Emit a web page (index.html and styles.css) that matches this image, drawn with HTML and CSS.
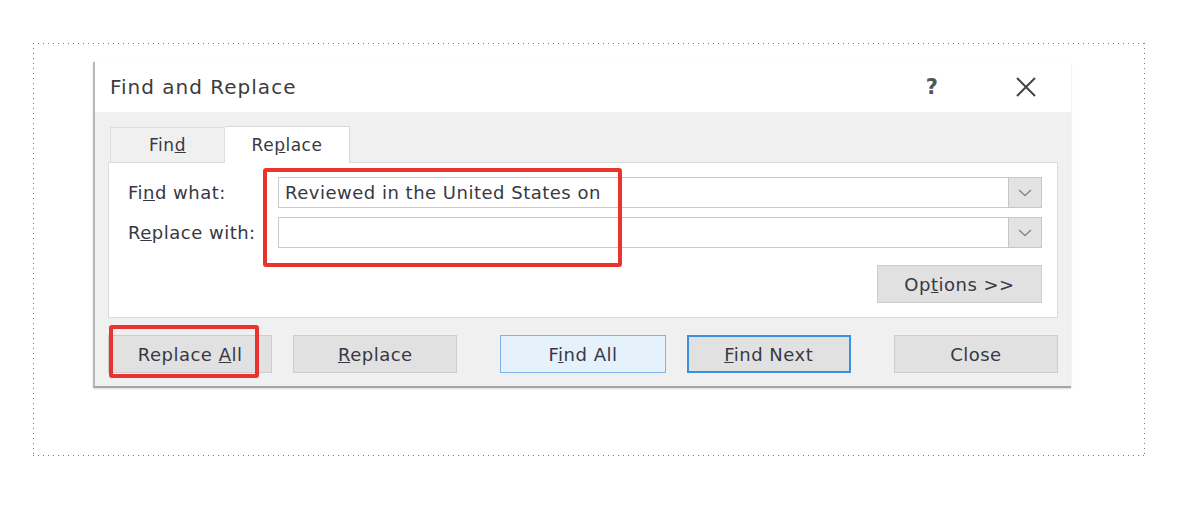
FILE: index.html
```html
<!DOCTYPE html>
<html lang="en">
<head>
    <meta charset="UTF-8">
    <meta name="viewport" content="width=device-width, initial-scale=1.0">
    <title>Find and Replace</title>
    <link rel="stylesheet" href="styles.css">
</head>
<body>
    <div class="frame">
        <div class="dialog">
            <div class="dialog-titlebar">
                <span class="dialog-title">Find and Replace</span>
                <span class="help-btn">?</span>
                <span class="close-btn">
                    <svg width="22" height="20" viewBox="0 0 22 20">
                        <path d="M2 1 L20 19 M20 1 L2 19" stroke="#444" stroke-width="2" fill="none"/>
                    </svg>
                </span>
            </div>

            <div class="dialog-body">
                <div class="tabs">
                    <div class="tab">Fin<u>d</u></div>
                    <div class="tab tab-active">Re<u>p</u>lace</div>
                </div>

                <div class="panel">
                    <div class="field-row">
                        <label class="field-label">Fi<u>n</u>d what:</label>
                        <div class="combo">
                            <div class="combo-input">Reviewed in the United States on</div>
                            <div class="combo-arrow">
                                <svg width="14" height="8" viewBox="0 0 14 8">
                                    <path d="M1 1 L7 6.5 L13 1" stroke="#8a8a8a" stroke-width="1.5" fill="none"/>
                                </svg>
                            </div>
                        </div>
                    </div>
                    <div class="field-row">
                        <label class="field-label">R<u>e</u>place with:</label>
                        <div class="combo">
                            <div class="combo-input"></div>
                            <div class="combo-arrow">
                                <svg width="14" height="8" viewBox="0 0 14 8">
                                    <path d="M1 1 L7 6.5 L13 1" stroke="#8a8a8a" stroke-width="1.5" fill="none"/>
                                </svg>
                            </div>
                        </div>
                    </div>
                    <div class="options-row">
                        <button class="btn">Op<u>t</u>ions &gt;&gt;</button>
                    </div>
                </div>

                <div class="button-row">
                    <button class="btn">Replace <u>A</u>ll</button>
                    <button class="btn"><u>R</u>eplace</button>
                    <button class="btn btn-hover spaced">F<u>i</u>nd All</button>
                    <button class="btn btn-default"><u>F</u>ind Next</button>
                    <button class="btn spaced">Close</button>
                </div>
            </div>

            <!-- highlight boxes -->
            <div class="mark mark-fields"></div>
            <div class="mark mark-replace-all"></div>
        </div>
    </div>
</body>
</html>
```

FILE: styles.css
```css
body {
    margin: 0;
    padding: 0;
    background: #fff;
    font-family: "DejaVu Sans", Verdana, sans-serif;
    color: #383844;
    letter-spacing: 0.5px;
}
.frame {
    margin: 43px 0 0 33px;
    width: 1112px;
    height: 413px;
    box-sizing: border-box;
    padding: 19px 0 0 60px;
    background:
        repeating-linear-gradient(to right, #777 0 1px, transparent 1px 5px) top left / 100% 1px no-repeat,
        repeating-linear-gradient(to right, #777 0 1px, transparent 1px 5px) bottom left / 100% 1px no-repeat,
        repeating-linear-gradient(to bottom, #777 0 1px, transparent 1px 5px) top left / 1px 100% no-repeat,
        repeating-linear-gradient(to bottom, #777 0 1px, transparent 1px 5px) top right / 1px 100% no-repeat;
}
.dialog {
    position: relative;
    width: 978px;
    box-sizing: border-box;
    border-left: 2px solid #b8b8b8;
    border-bottom: 2px solid #a4a4a4;
    box-shadow: 0 1px 2px rgba(0, 0, 0, 0.15);
}
.dialog-titlebar {
    height: 50px;
    display: flex;
    align-items: center;
    padding-left: 15px;
    background: #fff;
}
.dialog-title {
    font-size: 20px;
    letter-spacing: 1px;
    color: #3c3c3c;
    flex: 1;
}
.help-btn {
    width: 20px;
    margin-right: 73px;
    font-size: 21px;
    font-weight: bold;
    color: #555;
    text-align: center;
}
.close-btn {
    width: 22px;
    height: 20px;
    margin-right: 34px;
}
.dialog-body {
    background: #f0f0f0;
    padding: 13px 13px 13px 13px;
}
.tabs {
    display: flex;
    align-items: flex-end;
    padding-left: 2px;
    height: 37px;
}
.tab {
    width: 115px;
    height: 35px;
    box-sizing: border-box;
    border: 1px solid #dedede;
    border-bottom: none;
    display: flex;
    align-items: center;
    justify-content: center;
    font-size: 17px;
}
.tab-active {
    width: 125px;
    height: 37px;
    background: #fff;
    border-left: none;
    border-color: #d9d9d9;
    margin-bottom: -1px;
    position: relative;
}
.panel {
    height: 156px;
    box-sizing: border-box;
    background: #fff;
    border: 1px solid #dcdcdc;
    padding: 14px 15px 0 19px;
}
.field-row {
    display: flex;
    align-items: center;
    height: 31px;
    margin-bottom: 9px;
}
.field-label {
    width: 150px;
    font-size: 18px;
}
.combo {
    flex: 1;
    display: flex;
    height: 31px;
}
.combo-input {
    flex: 1;
    border: 1px solid #c9c9c9;
    border-right: none;
    padding-left: 6px;
    font-size: 18px;
    line-height: 29px;
}
.combo-arrow {
    width: 34px;
    box-sizing: border-box;
    background: #e3e3e3;
    border: 1px solid #c6c6c6;
    display: flex;
    align-items: center;
    justify-content: center;
}
.options-row {
    display: flex;
    justify-content: flex-end;
    margin-top: 17px;
}
.btn {
    width: 165px;
    height: 38px;
    box-sizing: border-box;
    background: #e1e1e1;
    border: 1px solid #cdcdcd;
    font-family: inherit;
    font-size: 18px;
    letter-spacing: inherit;
    color: #383844;
    padding: 0;
}
.btn-hover {
    width: 166px;
    background: #e5f1fb;
    border-color: #7ab4ea;
}
.btn-default {
    border: 2px solid #3c8fdc;
}
.button-row {
    display: flex;
    gap: 21px;
    margin-top: 17px;
}
.spaced {
    margin-left: 22px;
}
.mark {
    position: absolute;
    border: 4px solid #e8342c;
    border-radius: 3px;
    box-sizing: border-box;
}
.mark-fields {
    left: 168px;
    top: 106px;
    width: 359px;
    height: 99px;
}
.mark-replace-all {
    left: 14px;
    top: 263px;
    width: 150px;
    height: 53px;
}
```
